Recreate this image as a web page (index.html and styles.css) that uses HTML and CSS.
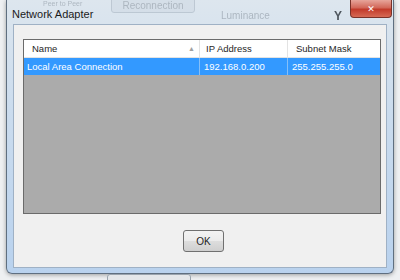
FILE: index.html
```html
<!DOCTYPE html>
<html lang="en">
<head>
    <meta charset="UTF-8">
    <title>Network Adapter</title>
    <link rel="stylesheet" href="styles.css">
</head>
<body>

    <!-- Dialog window (Aero style) -->
    <div class="window">
        <div class="titlebar">
            <!-- blurred content seen through the glass -->
            <span class="ghost ghost-peer">Peer to Peer</span>
            <span class="ghost ghost-btn">Reconnection</span>
            <span class="ghost ghost-lum">Luminance</span>
            <span class="ghost ghost-y">Y</span>

            <span class="title">Network Adapter</span>
            <button class="close" type="button">&#x2715;</button>
        </div>

        <div class="client">
            <div class="listview">
                <div class="lv-row lv-header">
                    <div class="cell">Name <span class="sort">&#9650;</span></div>
                    <div class="cell">IP Address</div>
                    <div class="cell">Subnet Mask</div>
                </div>
                <div class="lv-row lv-item selected">
                    <div class="cell">Local Area Connection</div>
                    <div class="cell">192.168.0.200</div>
                    <div class="cell">255.255.255.0</div>
                </div>
            </div>

            <div class="actions">
                <button class="btn" type="button">OK</button>
            </div>
        </div>
    </div>

    <!-- window behind, peeking out at the bottom -->
    <div class="desk-bottom">
        <span class="ghost-box"></span>
    </div>

</body>
</html>
```

FILE: styles.css
```css
/* Page */
body {
    margin: 0;
    width: 400px;
    height: 280px;
    overflow: hidden;
    background-color: #eef0f2;
    font-family: 'Liberation Sans', Arial, sans-serif;
    color: #1e1e1e;
}

/* Window frame */
.window {
    margin-left: 6px;
    width: 388px;
    height: 274px;
    box-sizing: border-box;
    border: 1px solid #5f6f80;
    border-top: none;
    border-radius: 0 0 6px 6px;
    background: linear-gradient(#dde6ee, #cbdcee 40%, #b9d2ee);
    box-shadow: 0 1px 4px rgba(0, 0, 0, 0.35);
    display: flex;
    flex-direction: column;
}

.titlebar {
    position: relative;
    height: 24px;
    display: flex;
    align-items: flex-start;
    padding-left: 5px;
}

.title {
    position: relative;
    font-size: 11px;
    line-height: 11px;
    margin-top: 9px;
    color: #1b1b1b;
}

.close {
    position: relative;
    margin-left: auto;
    margin-right: 1px;
    width: 42px;
    height: 18px;
    padding: 0;
    border: 1px solid #7a3229;
    border-top: none;
    border-radius: 0 0 4px 4px;
    background: linear-gradient(#e7a59b, #d2685a 45%, #c23b2b 55%, #d66a55);
    color: #fff;
    font-size: 9px;
    font-weight: bold;
    line-height: 16px;
    font-family: 'DejaVu Sans', sans-serif;
}

/* blurred things behind the glass */
.ghost {
    position: absolute;
    filter: blur(0.7px);
    opacity: 0.35;
    font-size: 10px;
    color: #55606c;
}

.ghost-peer {
    left: 36px;
    top: 0;
    font-size: 7px;
    line-height: 7px;
}

.ghost-btn {
    left: 104px;
    top: -4px;
    width: 82px;
    height: 15px;
    line-height: 18px;
    text-align: center;
    border: 1px solid #8593a3;
    border-radius: 3px;
    background-color: #c9d3dd;
}

.ghost-lum {
    left: 214px;
    top: 10px;
}

.ghost-y {
    left: 327px;
    top: 9px;
    font-size: 12px;
    font-weight: bold;
    color: #20272e;
    opacity: 0.75;
}

/* Client area */
.client {
    flex: 1;
    margin: 0 6px 5px;
    border: 1px solid #9fb1c5;
    background-color: #f0f0f0;
    padding: 14px 5px 0 9px;
    display: flex;
    flex-direction: column;
}

/* List view */
.listview {
    height: 175px;
    box-sizing: border-box;
    border: 1px solid #6b6b6b;
    background-color: #ababab;
    font-size: 9.5px;
}

.lv-row {
    display: grid;
    grid-template-columns: 176px 88px 1fr;
}

.lv-header {
    height: 17px;
    background-color: #fff;
    border-bottom: 1px solid #e3e3e3;
    color: #262626;
}

.lv-header .cell {
    padding-left: 8px;
    line-height: 17px;
    border-right: 1px solid #e3e3e3;
    position: relative;
}

.lv-header .cell:nth-child(2) {
    padding-left: 6px;
}

.lv-header .cell:last-child {
    border-right: none;
}

.sort {
    position: absolute;
    right: 4px;
    top: 0;
    font-size: 7px;
    color: #a0a0a0;
}

.lv-item {
    height: 17px;
    line-height: 17px;
}

.lv-item .cell {
    padding-left: 4px;
    border-right: 1px solid #86bff8;
}

.lv-item .cell:first-child {
    padding-left: 3px;
}

.lv-item .cell:last-child {
    border-right: none;
}

.selected {
    background-color: #3399ff;
    color: #fff;
}

/* Buttons */
.actions {
    display: flex;
    justify-content: center;
    padding: 16px 0 0 3px;
}

.btn {
    width: 41px;
    height: 22px;
    padding: 0;
    border: 1px solid #707070;
    border-radius: 3px;
    background: linear-gradient(#f3f3f3, #ebebeb 50%, #dddddd 51%, #cfcfcf);
    font-family: 'Liberation Sans', Arial, sans-serif;
    font-size: 10px;
    color: #1e1e1e;
}

/* Behind the dialog */
.desk-bottom {
    height: 6px;
    padding-left: 107px;
}

.ghost-box {
    display: block;
    width: 82px;
    height: 8px;
    border: 1px solid #9aa4ae;
    border-radius: 3px;
    background-color: #e4e7ea;
    filter: blur(0.5px);
}
```
